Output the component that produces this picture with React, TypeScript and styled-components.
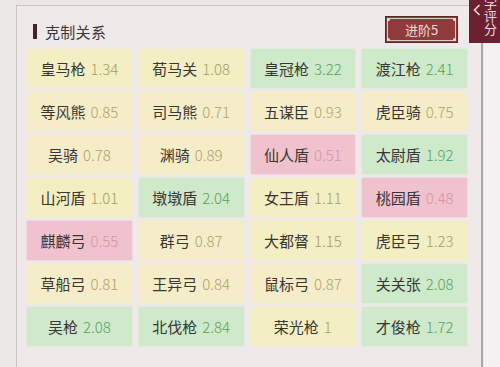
import React from 'react'
import styled, { createGlobalStyle } from 'styled-components'

const GlobalStyle = createGlobalStyle`
  html, body {
    margin: 0;
    padding: 0;
    background: #ebe7e7;
  }
  body {
    font-family: "Noto Sans CJK SC", "Noto Sans", sans-serif;
    overflow: hidden;
  }
`

type Tone = 'good' | 'mid' | 'low' | 'bad'

const tones: Record<Tone, { bg: string; num: string }> = {
  good: { bg: '#cfeacb', num: '#56a05c' },
  mid: { bg: '#f3efc2', num: '#a39d5e' },
  low: { bg: '#f5edc7', num: '#aea06a' },
  bad: { bg: '#f0c2cd', num: '#d493a4' },
}

const toneOf = (v: number): Tone => {
  if (v < 0.6) return 'bad'
  if (v < 1) return 'low'
  if (v < 1.5) return 'mid'
  return 'good'
}

const items: [string, string][] = [
  ['皇马枪', '1.34'], ['荀马关', '1.08'], ['皇冠枪', '3.22'], ['渡江枪', '2.41'],
  ['等风熊', '0.85'], ['司马熊', '0.71'], ['五谋臣', '0.93'], ['虎臣骑', '0.75'],
  ['吴骑', '0.78'], ['渊骑', '0.89'], ['仙人盾', '0.51'], ['太尉盾', '1.92'],
  ['山河盾', '1.01'], ['墩墩盾', '2.04'], ['女王盾', '1.11'], ['桃园盾', '0.48'],
  ['麒麟弓', '0.55'], ['群弓', '0.87'], ['大都督', '1.15'], ['虎臣弓', '1.23'],
  ['草船弓', '0.81'], ['王异弓', '0.84'], ['鼠标弓', '0.87'], ['关关张', '2.08'],
  ['吴枪', '2.08'], ['北伐枪', '2.84'], ['荣光枪', '1'], ['才俊枪', '1.72'],
]

export default function App() {
  return (
    <>
      <GlobalStyle />
      <Page>
        <Panel>
          <Header>
            <Title>
              <TitleMark />
              克制关系
            </Title>
            <StageButton>
              <Dot $pos="tl" />
              <Dot $pos="tr" />
              <Dot $pos="bl" />
              <Dot $pos="br" />
              进阶5
            </StageButton>
          </Header>
          <Grid>
            {items.map(([name, val]) => {
              const t = toneOf(parseFloat(val))
              return (
                <Cell key={name + val} $tone={t}>
                  <Name>{name}</Name>
                  <Value $tone={t}>{val}</Value>
                </Cell>
              )
            })}
          </Grid>
        </Panel>
        <SideTab>
          <Chevron viewBox="0 0 8 12">
            <path d="M6.5 1 L1.5 6 L6.5 11" fill="none" stroke="#f2d6d9" strokeWidth="1.6" />
          </Chevron>
          <SideText>学评分</SideText>
        </SideTab>
      </Page>
    </>
  )
}

const Page = styled.div`
  position: relative;
  width: 500px;
  height: 367px;
  overflow: hidden;
  background: linear-gradient(to right, #ebe7e7 0, #ebe7e7 484px, #f3f1f1 484px);
`

const Panel = styled.div`
  margin: 5px 0 0 16px;
  width: 467px;
  height: 380px;
  box-sizing: border-box;
  border-top: 1.5px solid #c9c5c5;
  border-left: 1.5px solid #c9c5c5;
  border-right: 2px solid #a9a6a6;
  background: #efe9ea;
  padding: 0 14px 0 10px;
`

const Header = styled.div`
  display: flex;
  align-items: center;
  justify-content: space-between;
  padding: 10px 9px 0 6px;
  height: 27px;
  margin-bottom: 6px;
`

const Title = styled.div`
  display: flex;
  align-items: center;
  gap: 8px;
  font-size: 15px;
  color: #3a3536;
  padding-top: 3px;
  letter-spacing: 0.3px;
`

const TitleMark = styled.span`
  display: block;
  width: 4px;
  height: 15px;
  background: #4b1f2b;
`

const StageButton = styled.div`
  position: relative;
  width: 73px;
  height: 27px;
  box-sizing: border-box;
  border: 1px solid #5a2a2a;
  outline: 1px solid #d8cccc;
  outline-offset: -3px;
  background: #8f3b3c;
  color: #f3dcdc;
  font-size: 13px;
  display: flex;
  align-items: center;
  justify-content: center;
`

const Dot = styled.span<{ $pos: 'tl' | 'tr' | 'bl' | 'br' }>`
  position: absolute;
  width: 3px;
  height: 3px;
  border-radius: 50%;
  background: #e8dede;
  ${p => (p.$pos[0] === 't' ? 'top: 1px;' : 'bottom: 1px;')}
  ${p => (p.$pos[1] === 'l' ? 'left: 1px;' : 'right: 1px;')}
`

const Grid = styled.div`
  display: grid;
  grid-template-columns: repeat(4, 1fr);
  grid-auto-rows: 39px;
  column-gap: 7px;
  row-gap: 4px;
`

const Cell = styled.div<{ $tone: Tone }>`
  display: flex;
  align-items: center;
  justify-content: center;
  gap: 5px;
  background: ${p => tones[p.$tone].bg};
  box-shadow: 0 0 2px ${p => tones[p.$tone].bg};
  font-size: 15px;
`

const Name = styled.span`
  color: #383535;
`

const Value = styled.span<{ $tone: Tone }>`
  color: ${p => tones[p.$tone].num};
  font-family: "Noto Sans CJK SC", "Noto Sans", sans-serif;
  font-weight: 300;
  font-size: 15px;
`

const SideTab = styled.div`
  position: absolute;
  top: 0;
  left: 469px;
  width: 40px;
  height: 43px;
  background: #6b1f31;
  display: flex;
  align-items: flex-start;
  overflow: hidden;
`

const Chevron = styled.svg`
  width: 8px;
  height: 12px;
  margin: 4px 0 0 4px;
`

const SideText = styled.div`
  writing-mode: vertical-rl;
  color: #f2d6d9;
  font-size: 13px;
  line-height: 14px;
  margin: -3px 0 0 2px;
`
